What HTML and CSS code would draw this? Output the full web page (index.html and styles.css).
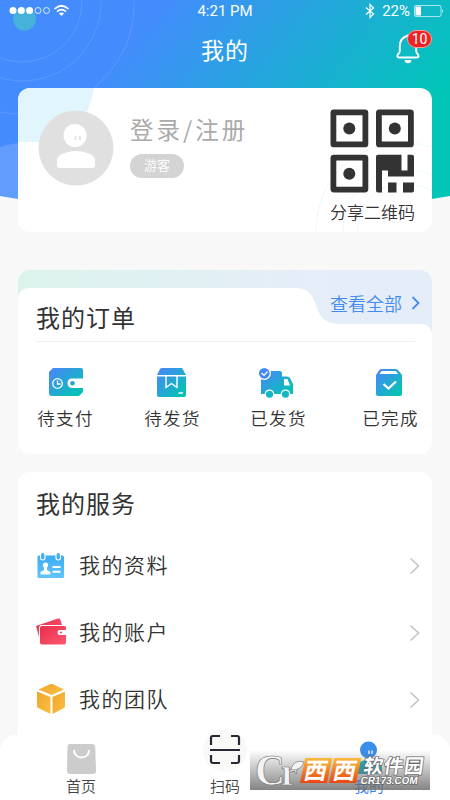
FILE: index.html
```html
<!DOCTYPE html>
<html lang="zh-CN">
<head>
<meta charset="utf-8">
<title>我的</title>
<link rel="stylesheet" href="styles.css">
</head>
<body>
<svg class="defs" width="0" height="0" aria-hidden="true">
  <defs>
    <linearGradient id="teal" x1="0" y1="0" x2="1" y2="1"><stop offset=".1" stop-color="#438bf4"/><stop offset=".9" stop-color="#05c3b4"/></linearGradient>
    <linearGradient id="head" gradientUnits="userSpaceOnUse" x1="105" y1="0" x2="370" y2="213"><stop offset=".12" stop-color="#448bfd"/><stop offset=".95" stop-color="#00c6b7"/></linearGradient>
    <linearGradient id="sky" x1="0" y1="0" x2="0" y2="1"><stop stop-color="#3cabf3"/><stop offset="1" stop-color="#62c4fa"/></linearGradient>
    <linearGradient id="rose" x1="0" y1="0" x2="1" y2="1"><stop stop-color="#e92e4c"/><stop offset="1" stop-color="#fd5870"/></linearGradient>
    <linearGradient id="gold" x1="0" y1="0" x2="1" y2="1"><stop stop-color="#eda52c"/><stop offset="1" stop-color="#fbc043"/></linearGradient>
    <linearGradient id="tab" x1="0" y1="0" x2="1" y2="0"><stop stop-color="#dcf3ec"/><stop offset=".75" stop-color="#e5edf9"/></linearGradient>
    <linearGradient id="orange" x1="0" y1="0" x2="0" y2="1"><stop stop-color="#f9bb3c"/><stop offset="1" stop-color="#e94713"/></linearGradient>
  </defs>
</svg>
<div class="screen">
  <svg class="backdrop" width="450" height="215" viewBox="0 0 450 215">
    <path d="M0 0H450V196Q225 237 0 196Z" fill="url(#head)"/>
    <g fill="none" stroke="#fff" stroke-opacity=".12"><circle cx="22" cy="2" r="60"/><circle cx="22" cy="2" r="79"/><path d="M134 0Q136 51 94 88M0 112Q10 114 20 114"/></g>
    <path d="M0 147Q9 144 18 143V199L0 196Z" fill="#fff" fill-opacity=".16"/>
    <circle cx="24.500" cy="19" r="11.500" fill="#45b2d9"/>
  </svg>
  <header>
    <div class="status">
      <svg width="62" height="14" viewBox="0 0 62 14"><g fill="#fff"><circle cx="5" cy="6.500" r="3.500"/><circle cx="13.300" cy="6.500" r="3.500"/><circle cx="21.600" cy="6.500" r="3.500"/></g><g fill="none" stroke="#fff" stroke-width=".8"><circle cx="30" cy="6.500" r="3"/><circle cx="38.500" cy="6.500" r="3"/></g><g fill="none" stroke="#fff" stroke-width="1.700"><path d="M46.500 5Q53.500-1.500 60.500 5M49 7.600Q53.500 3.500 58 7.600"/></g><path d="M51 9.500Q53.500 7.500 56 9.500L53.500 12Z" fill="#fff"/></svg>
      <span class="time">4:21 PM</span>
      <span class="power">
        <svg width="10" height="16" viewBox="0 0 10 16"><path d="M1 4.500L8.500 11L5 14.500V1.500L8.500 5L1 11.500" fill="none" stroke="#fff" stroke-width="1.200"/></svg>
        <span>22%</span>
        <svg width="30" height="12" viewBox="0 0 30 12"><rect x=".5" y=".5" width="26.500" height="11" rx="1.500" fill="none" stroke="#fff" stroke-opacity=".65"/><path d="M1.500 1.500H7V10.500H1.500Z" fill="#fff"/><path d="M28 4Q29.700 6 28 8Z" fill="#fff"/></svg>
      </span>
    </div>
    <div class="titlebar">
      <h1>我的</h1>
      <div class="bell">
        <svg width="24" height="30" viewBox="0 0 24 30"><path d="M12 1.500Q3.800 4 3.800 12V17Q3.800 19 1.800 20.500Q.5 23.500 3 23.500H21Q23.500 23.500 22 20.500Q20.200 19 20.200 17V12Q20.200 4 12 1.500Z" fill="none" stroke="#fff" stroke-width="1.900"/><path d="M8.500 26H15.500Q15 29.300 12 29.300T8.500 26Z" fill="#fff"/></svg>
        <span class="badge">10</span>
      </div>
    </div>
  </header>

  <section class="card profile">
    <svg class="rings" width="414" height="145" viewBox="0 0 414 145"><path d="M0 0H76Q67 54 18 54H0Z" fill="#e1f5fd"/><g fill="none" stroke="#eef8fa"><path d="M298 145C298 90 338 55 386 55Q402 55 414 59M325 145C325 106 352 82 386 82Q403 82 414 87M340 145C340 115 358 96 386 96Q403 96 414 103"/></g></svg>
    <svg class="avatar" width="76" height="76" viewBox="0 0 76 76"><circle cx="38" cy="38" r="37.500" fill="#e0e0e0"/><circle cx="37" cy="25.500" r="11.500" fill="#fff"/><path d="M19 50Q19 47 22 45Q38 37 54 45Q57 47 57 50V55Q57 58 54 58H22Q19 58 19 55Z" fill="#fff"/><path d="M37.500 26V30M42 26V30" stroke="#ddd" stroke-width="1.600"/></svg>
    <div class="who"><div class="login">登录/注册</div><span class="guest">游客</span></div>
    <div class="share">
      <svg width="84" height="84" viewBox="0 0 84 84"><g fill="none" stroke="#333" stroke-width="5.800"><rect x="3.400" y="3.400" width="32" height="32" rx=".5"/><rect x="48.900" y="3.400" width="32" height="32" rx=".5"/><rect x="3.400" y="48.600" width="32" height="32" rx=".5"/></g><g fill="#333"><circle cx="19.300" cy="19.500" r="6"/><circle cx="64.800" cy="19.500" r="6"/><circle cx="19.300" cy="64.700" r="6"/><path d="M48 45.700H71.500V61.500H77.500V45.700H82Q84 45.700 84 48V67.500H58V61.500H52V83.500H48Q46 83.500 46 81.500V47.700Q46 45.700 48 45.700ZM58 73.500H66.500V83.500H58ZM73 73.500H84V81.500Q84 83.500 82 83.500H73Z"/></g></svg>
      <span>分享二维码</span>
    </div>
  </section>

  <section class="card orders">
    <svg class="tabshape" width="414" height="70" viewBox="0 0 414 70"><path d="M0 70V0H414V70Z" fill="url(#tab)"/><path d="M0 70V30Q0 18 12 18H277C307 18 289 54 322 54H402Q414 54 414 66V70Z" fill="#fff"/></svg>
    <div class="orders-head"><h2>我的订单</h2><div class="all">查看全部<svg width="9" height="14" viewBox="0 0 9 14"><path d="M1.500 1L7.500 7L1.500 13" fill="none" stroke="#438af3" stroke-width="1.800"/></svg></div></div>
    <div class="states">
      <div class="state">
        <svg width="36" height="32" viewBox="0 0 36 32"><path d="M5 1H33Q35 1 35 3V11.500H24Q19.500 11.500 19.500 16T24 21H35V25L31 29H4Q1 29 1 26V5Z" fill="url(#teal)"/><circle cx="9.500" cy="16.500" r="4.800" fill="none" stroke="#fff" stroke-width="1.300"/><path d="M9.500 13.500V17H12.500" fill="none" stroke="#fff" stroke-width="1.300"/><path d="M24 12H33V20.500H24Q20.500 20 20.500 16.300T24 12Z" fill="#fff"/><circle cx="24.500" cy="16.300" r="2.300" fill="url(#teal)"/></svg>
        <span>待支付</span>
      </div>
      <div class="state">
        <svg width="36" height="32" viewBox="0 0 36 32"><path d="M7 1H27L31 8H2L5 2Q5.500 1 7 1ZM2 9.500H31V28Q31 30 29 30H4Q2 30 2 28Z" fill="url(#teal)"/><path d="M11 9V20.500L16.500 16.500L22 20.500V9" fill="none" stroke="#fff" stroke-width="1.400"/><path d="M23.500 26H28" stroke="#fff" stroke-width="1.600"/></svg>
        <span>待发货</span>
      </div>
      <div class="state truck">
        <svg width="36" height="32" viewBox="0 0 36 32"><path d="M3 4H22Q24 4 24 6V9.500H29Q31 9.500 32 11L35 17V27H3Z" fill="url(#teal)"/><path d="M26 12H29.500L32 18.500H26Z" fill="#fff"/><circle cx="6.300" cy="6.300" r="6" fill="#438bf2" stroke="#fff" stroke-width="1.300"/><path d="M3.500 6L6 8.300L9.500 4.500" fill="none" stroke="#fff" stroke-width="1.200"/><g fill="#15b6c1" stroke="#fff" stroke-width="1.300"><circle cx="11.500" cy="27.300" r="4.200"/><circle cx="27.500" cy="27.300" r="4.200"/></g></svg>
        <span>已发货</span>
      </div>
      <div class="state done">
        <svg width="36" height="32" viewBox="0 0 36 32"><path d="M10 2H25Q26.500 2 27.500 3.500L31 8V27Q31 29 29 29H7Q5 29 5 27V8L8 3.500Q9 2 10 2Z" fill="url(#teal)"/><path d="M10.500 4H25L27 7H8.500Z" fill="#fff"/><path d="M12.500 17L17.500 21.500L25 14.500" fill="none" stroke="#fff" stroke-width="2.300"/></svg>
        <span>已完成</span>
      </div>
    </div>
  </section>

  <section class="card services">
    <h2>我的服务</h2>
    <div class="row">
      <svg width="32" height="30" viewBox="0 0 32 30"><rect x="1.500" y="4.500" width="26.500" height="22.500" rx="1.500" fill="url(#sky)"/><g fill="#42adf1" stroke="#fff" stroke-width="1.100"><rect x="4.500" y="1.500" width="4.500" height="7.500" rx="2.200"/><rect x="20" y="1.500" width="4.500" height="7.500" rx="2.200"/></g><path d="M9.500 11.500C12.500 11.500 12.800 14.500 11 17V19L14.500 21V23.500H4.500V21L8 19V17C6.200 14.500 6.500 11.500 9.500 11.500Z" fill="#fff"/><path d="M16.500 16H24.500M16.500 20.800H24.500" stroke="#fff" stroke-width="2"/></svg>
      <span>我的资料</span>
      <svg class="go" width="11" height="18" viewBox="0 0 11 18"><path d="M1.500 1.500L9.500 9L1.500 16.500"/></svg>
    </div>
    <div class="row">
      <svg width="32" height="30" viewBox="0 0 32 30"><path d="M0 8L22 .5Q24 0 24.500 2L26 7H6Q3 7 3 10V19Z" fill="url(#rose)"/><path d="M6 8H28Q30 8 30 10V12H24Q21.500 12 21.500 14.500T24 17H30V24Q30 26.500 28 26.500H6Q4 26.500 4 24.500V10Q4 8 6 8Z" fill="url(#rose)"/><path d="M24.500 12.300H30V16.700H24.500Q22.500 16.500 22.500 14.500T24.500 12.300Z" fill="#fff"/><circle cx="25" cy="14.500" r="1" fill="#ee405b"/></svg>
      <span>我的账户</span>
      <svg class="go" width="11" height="18" viewBox="0 0 11 18"><path d="M1.500 1.500L9.500 9L1.500 16.500"/></svg>
    </div>
    <div class="row">
      <svg width="32" height="32" viewBox="-1 1 32 32"><g fill="url(#gold)"><path d="M1.500 6.500L13 1.200Q14.500.5 16 1.200L27 6.500L14.500 12Z"/><path d="M0 8.500L13.500 14V31L1.200 25Q0 24.500 0 23Z"/><path d="M28 8.500L15.500 14V31L27 25Q28 24.500 28 23Z"/></g></svg>
      <span>我的团队</span>
      <svg class="go" width="11" height="18" viewBox="0 0 11 18"><path d="M1.500 1.500L9.500 9L1.500 16.500"/></svg>
    </div>
  </section>

  <nav>
    <div class="item"><svg width="44" height="44" viewBox="0 -7 44 44"><path d="M10.500 9H33.500Q36 9 36.200 11.500L37 36Q37 39 34 39H11Q8 39 8 36L8.500 11.500Q8.500 9 10.500 9Z" fill="#ccc"/><path d="M15 15C15 25 30 25 30 15" fill="none" stroke="#fff" stroke-width="2"/></svg><span>首页</span></div>
    <div class="item"><svg width="44" height="44" viewBox="0 0 44 44"><circle cx="22" cy="22" r="22" fill="#f9f9f7"/><g fill="none" stroke="#272735" stroke-width="2.200"><path d="M8 17V10Q8 8 10 8H17M28 8H34Q36 8 36 10V17M8 27V33Q8 35 10 35H17M28 35H34Q36 35 36 33V27M7 22H37"/></g></svg><span>扫码</span></div>
    <div class="item active"><svg width="44" height="44" viewBox="0 -7 44 44"><circle cx="21.500" cy="15" r="8.500" fill="#398eea"/><path d="M22 15.500V19M25 15.500V19" stroke="#fff" stroke-width="1.300"/><path d="M9 34Q9 29 13 27Q22 22 31 27Q35 29 35 34V39H9Z" fill="#17afbd"/></svg><span>我的</span></div>
  </nav>

  <svg class="stamp" width="180" height="40" viewBox="0 0 180 40">
    <g font-family="Liberation Serif, serif" font-weight="bold" fill="#f4f4f4" stroke="#777" stroke-width=".7"><text x="5" y="35" font-size="45" textLength="30" lengthAdjust="spacingAndGlyphs">C</text><text x="31" y="35" font-size="37">r</text><path d="M41 19Q44 9 54 12Q51 20 43 20Z"/></g>
    <g transform="translate(50 0) skewX(-12)"><path d="M7 8H34V33H7ZM36 8H63V33H36Z" fill="url(#orange)"/><g font-family="Noto Sans CJK SC, sans-serif" font-weight="bold" font-size="23" fill="#fff"><text x="9" y="29">西</text><text x="38" y="29">西</text></g></g>
    <g transform="translate(113 0) skewX(-8)" fill="#fff" stroke="#666" stroke-width="1.400" paint-order="stroke"><text x="3" y="23" font-family="Noto Sans CJK SC, sans-serif" font-weight="bold" font-size="19.500" textLength="60">软件园</text><text x="2" y="34" font-family="Liberation Sans, sans-serif" font-weight="bold" font-size="10.500" textLength="57" lengthAdjust="spacingAndGlyphs">CR173.COM</text></g>
  </svg>
</div>
</body>
</html>
```

FILE: styles.css
```css
* { box-sizing: border-box; }
body { margin: 0; background: #f8f8f8; font-family: "Noto Sans CJK SC", sans-serif; font-weight: 350; color: #333; }
svg { display: block; flex: none; }
.defs { position: absolute; }
h1, h2 { margin: 0; font-weight: 400; }
.screen { position: relative; width: 450px; height: 800px; overflow: hidden; }
.backdrop { position: absolute; left: 0; top: 0; }
header { position: relative; height: 88px; color: #fff; }
.status { display: grid; grid-template-columns: 1fr auto 1fr; align-items: center; height: 22px; padding: 0 6px 0 8px; font: 400 14px/22px Roboto, sans-serif; }
.time { font-size: 15px; margin-right: 2px; }
.power { display: flex; align-items: center; justify-content: flex-end; gap: 7px; }
.power span { margin-right: -3px; font-size: 15px; }
.titlebar { display: grid; grid-template-columns: 1fr auto 1fr; padding: 10px 30px 0; }
h1 { grid-column: 2; font-size: 23px; line-height: 34px; letter-spacing: 1px; }
.bell { position: relative; justify-self: end; width: 24px; padding-top: 2px; }
.badge { position: absolute; left: 11px; top: -2px; width: 25px; height: 18px; border: 1px solid #f5a0a0; border-radius: 9px; background: #ed2324; font: 14px/16px Roboto, sans-serif; text-align: center; }
.card { position: relative; margin: 0 18px; border-radius: 12px; background: #fff; overflow: hidden; }
.profile { display: flex; height: 144px; padding: 22px 16px 0 20px; }
.rings, .tabshape { position: absolute; left: 0; top: 0; }
.avatar, .who, .share { position: relative; }
.who { margin-left: 16px; flex: 1; }
.login { font-size: 23.500px; font-weight: 400; line-height: 34px; letter-spacing: 3px; margin-top: 2px; color: #aaa; white-space: nowrap; }
.guest { display: block; width: 54px; height: 24px; margin-top: 8px; border-radius: 12px; background: #d4d4d4; color: #fff; font-size: 13px; line-height: 22px; text-align: center; }
.share { width: 86px; font-size: 17px; line-height: 24px; white-space: nowrap; }
.share svg { margin-top: -1px; }
.share span { display: block; margin-top: 7px; }
.orders { margin-top: 38px; height: 184px; }
.orders-head { position: relative; display: flex; justify-content: space-between; height: 72px; margin: 0 17px 0 18px; border-bottom: 1px solid #f0f0f0; }
h2 { font-size: 24px; line-height: 34px; letter-spacing: 1px; }
.orders-head h2 { margin-top: 30px; }
.all { display: flex; align-items: center; gap: 9px; height: 28px; margin: 19px -5px 0 0; color: #438af3; font-size: 18px; }
.states { position: relative; display: grid; grid-template-columns: 107px 106px 112px 57px; padding: 25px 0 0 19px; }
.state { display: flex; flex-direction: column; align-items: center; width: 57px; font-size: 17.500px; line-height: 26px; letter-spacing: 1.300px; white-space: nowrap; }
.state span { margin-top: 6px; }
.truck svg { margin-left: -5px; }
.done svg { margin-left: -4px; }
.services { margin-top: 18px; height: 346px; padding: 14px 12px 0 18px; }
.row { display: flex; align-items: center; height: 67px; font-size: 21px; letter-spacing: 1.500px; }
.services h2 { margin-bottom: 12px; }
.row span { margin: -4px 0 0 11px; flex: 1; }
.go path { fill: none; stroke: #c4c4c4; stroke-width: 1.600; }
nav { position: absolute; left: 0; top: 735px; width: 450px; height: 65px; display: flex; justify-content: space-between; padding: 0 58px; border-radius: 16px 16px 0 0; background: #fff; }
.item { display: flex; flex-direction: column; align-items: center; width: 46px; margin-top: -7px; font-size: 15px; line-height: 22px; color: #444; }
.item svg { overflow: visible; }
.item span { margin-top: 3px; }
.active { color: #2f7be8; }
.stamp { position: absolute; left: 250px; top: 750px; overflow: visible; background: linear-gradient(rgba(110,110,110,0), rgba(110,110,110,.85)); }
```
